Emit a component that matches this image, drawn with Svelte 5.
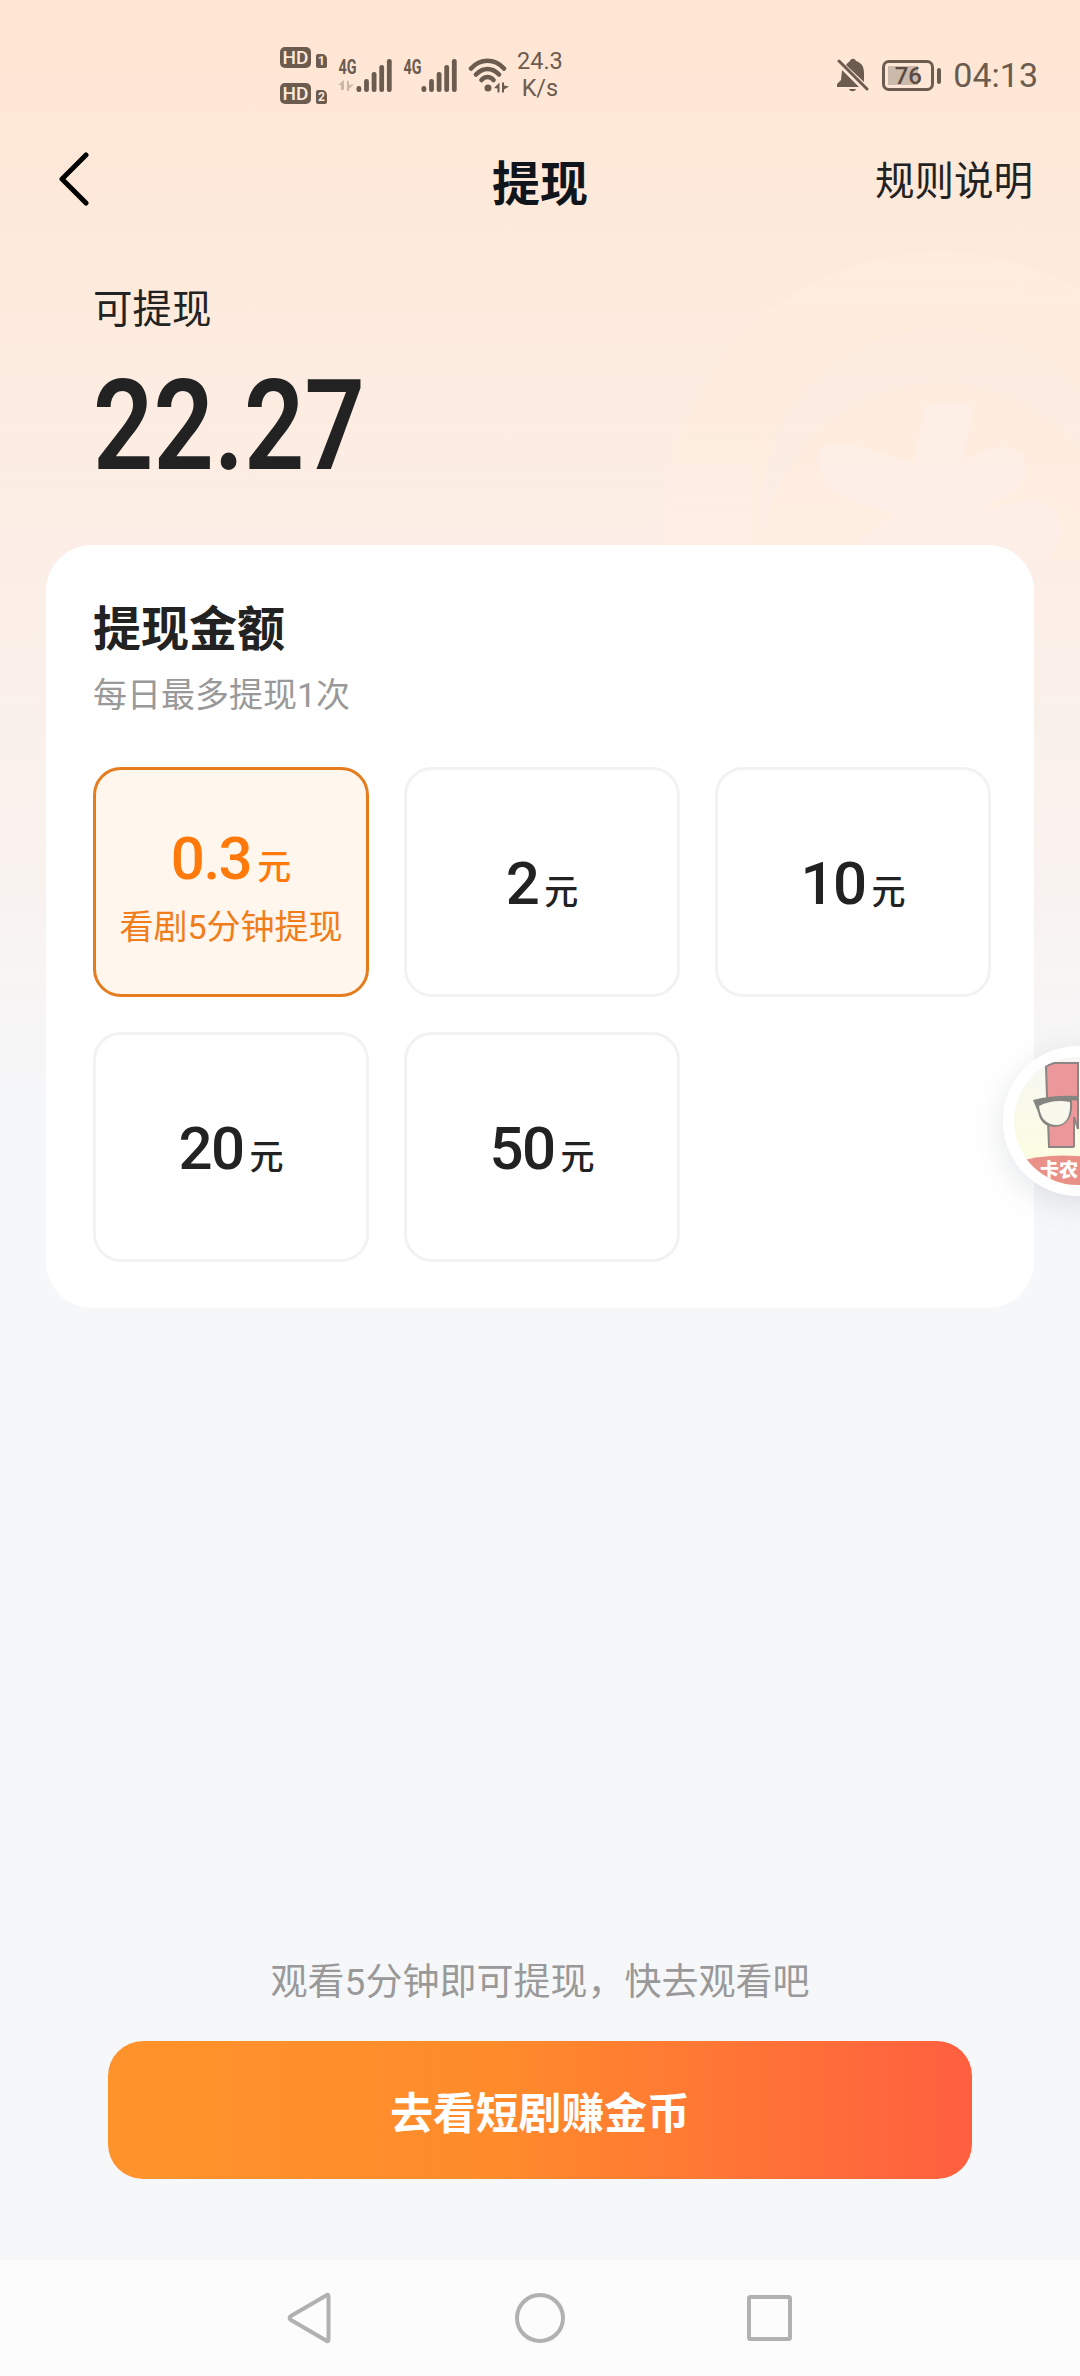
<script>
  let selected = $state(0)

  const options = [
    { amount: '0.3', note: '看剧5分钟提现' },
    { amount: '2' },
    { amount: '10' },
    { amount: '20' },
    { amount: '50' },
  ]
  const bars = [6, 13, 20, 27, 33]
</script>

{#snippet signal(faded)}
  <svg class="signal" width="56" height="36" viewBox="0 0 56 36">
    <text x="0.5" y="16.5" textLength="18" lengthAdjust="spacingAndGlyphs">4G</text>
    {#if faded}
      <path class="faded" d="M6 23v10h-3v-5h-3zM9 34v-10h2v4l5-1-5 5v2z" />
    {/if}
    {#each bars as h, i}
      <rect x={18.5 + i * 7.6} y={35 - h} width="4.8" height={h} rx="2.2" />
    {/each}
  </svg>
{/snippet}

<div class="page">
  <svg class="coin" width="440" height="330" viewBox="0 0 440 330">
    <defs>
      <linearGradient id="ring" x1="0" y1="0" x2="0" y2="1">
        <stop offset="0" stop-color="#ffeddc" stop-opacity=".8" />
        <stop offset="1" stop-color="#ffeede" stop-opacity=".5" />
      </linearGradient>
    </defs>
    <path class="disc" d="M123 330a177 177 0 0 1 354 0z" />
    <path fill="url(#ring)" fill-rule="evenodd" d="M25 330A278 278 0 0 1 300 22A278 278 0 0 1 575 330H475A177 177 0 0 0 300 99A177 177 0 0 0 130 330z" />
    <path class="leaf block" d="M24 234h88v96H24z" />
    <path class="leaf" d="M178 224c2-14 34-12 56-3 12 5 26 8 40 11l10-54c2-8 46-8 50 0l-12 54c14-6 32-20 48-14 22 8 20 32 4 44l-34 18c16-2 40-12 60-8 24 6 30 36 8 58H208c8-20 26-32 46-46-30-10-78-16-76-60z" />
  </svg>

  <div class="status">
    <div class="hd">
      <div><b>HD</b><i>1</i></div>
      <div><b>HD</b><i>2</i></div>
    </div>
    {@render signal(true)}
    {@render signal(false)}
    <svg class="wifi" width="42" height="36" viewBox="0 0 42 36">
      <path d="M3 11.500C12 1 27 1 36 11.500M8 17.500C15 10 24 10 31 17.500M13.500 23C17 19 22 19 25.500 23" />
      <circle cx="20" cy="31" r="3.500" />
      <path class="solid" d="M31.500 25.500v10h-2v-4l-3.500-.5zM34 25.500h2v3l5 1-5 3v3h-2z" />
    </svg>
    <div class="speed">24.3<br />K/s</div>
    <div class="right">
      <svg width="32" height="34" viewBox="0 0 32 34">
        <path class="bell" d="M9 7C10 5 12 4 13 3c1-3 5-3 6 0 6 2 8 6 8 12v9zM5 12l17 17H0v-3l4-4zM12 31h7c-1 3-6 3-7 0z" />
        <path class="slash" d="M2 3l28 28" />
      </svg>
      <div class="battery"><span>76</span></div>
      <span class="clock">04:13</span>
    </div>
  </div>

  <header>
    <svg class="back" width="34" height="54" viewBox="0 0 34 54">
      <path d="M29 3L5 27l24 24" />
    </svg>
    <h1>提现</h1>
    <span class="rules">规则说明</span>
  </header>

  <section class="balance">
    <p>可提现</p>
    <strong>22.27</strong>
  </section>

  <section class="card">
    <h2>提现金额</h2>
    <p class="limit">每日最多提现1次</p>
    <div class="grid">
      {#each options as option, i}
        <button class="tile" class:active={selected === i} onclick={() => (selected = i)}>
          <span class="amount">{option.amount}<small>元</small></span>
          {#if option.note}<span class="note">{option.note}</span>{/if}
        </button>
      {/each}
    </div>
  </section>

  <div class="bottom">
    <p>观看5分钟即可提现，快去观看吧</p>
    <button class="go">去看短剧赚金币</button>
  </div>

  <nav>
    <svg width="50" height="56" viewBox="0 0 50 56"><path d="M42.500 6.500v43q0 3-2.500 1L5 30q-3-2 0-4L40 5.500q2.500-2 2.500 1z" /></svg>
    <svg width="50" height="56" viewBox="0 0 50 56"><circle cx="25" cy="28" r="23" /></svg>
    <svg width="50" height="56" viewBox="0 0 50 56"><rect x="5" y="7" width="41" height="42" rx="1.500" /></svg>
  </nav>

  <div class="floating">
    <svg width="150" height="150" viewBox="0 0 150 150">
      <defs>
        <clipPath id="face"><circle cx="75" cy="75" r="64" /></clipPath>
        <linearGradient id="glow" x1="0" y1="0" x2="0" y2="1">
          <stop offset="0" stop-color="#f6f6f4" />
          <stop offset="1" stop-color="#fdffdc" />
        </linearGradient>
      </defs>
      <circle class="rim" cx="75" cy="75" r="75" />
      <g clip-path="url(#face)">
        <rect width="150" height="150" fill="url(#glow)" />
        <path class="figure" d="M43 20l8-3h24v66l-4-12v29q0 1-2 1H46l-1-26-1-24z" />
        <path class="frame" d="M30 54q20-5 45-4v5l-6-1q2 25-17 27-14 0-17-15z" />
        <path class="lens" d="M36 60q14-7 31-4 1 22-13 23Q38 79 36 60z" />
        <path class="banner" d="M0 121Q40 104 90 112v40H0z" />
        <text x="37" y="131">卡农</text>
      </g>
    </svg>
  </div>
</div>

<style>
  :global(body) { margin: 0; }

  .page {
    position: relative;
    display: flex;
    flex-direction: column;
    width: 1080px;
    height: 2376px;
    overflow: hidden;
    color: #222;
    font-family: Roboto, 'Noto Sans CJK SC', sans-serif;
    background: linear-gradient(#ffe5d3 0, #fde9da 200px, #fceee6 540px, #f9f2ee 850px, #f6f7f9 1100px, #f6f7f9 100%);
  }

  p, h1, h2 { margin: 0; }
  button { font-family: inherit; padding: 0; }

  .coin { position: absolute; left: 640px; top: 230px; }
  .disc { fill: #ffeddc; opacity: .5; }
  .leaf { fill: #fdeee7; opacity: .85; }
  .block { opacity: .5; }

  .status {
    position: relative;
    display: flex;
    align-items: center;
    box-sizing: border-box;
    height: 150px;
    padding: 0 42px 0 280px;
    color: #6c5b4f;
    fill: #6c5b4f;
  }
  .hd { display: flex; flex-direction: column; gap: 15px; margin-right: 11px; }
  .hd div { display: flex; align-items: flex-end; gap: 5px; height: 21px; }
  .hd b, .hd i {
    background: #6c5b4f;
    color: #ffe8d8;
    font-style: normal;
    text-align: center;
  }
  .hd b { width: 31px; height: 21px; border-radius: 5px; font-size: 19px; line-height: 22px; font-weight: 500; }
  .hd i { width: 11px; height: 14px; border-radius: 2px 5px 2px 2px; font-size: 12px; line-height: 15px; font-weight: 700; }
  .signal { margin-right: 9px; overflow: visible; }
  .signal text { font-size: 20px; font-weight: 700; }
  .faded { opacity: .35; }
  .wifi path { fill: none; stroke: #6c5b4f; stroke-width: 4.500; stroke-linecap: round; }
  .wifi .solid { fill: #6c5b4f; stroke: none; }
  .speed { margin-left: 7px; text-align: center; font-size: 23.500px; line-height: 27px; }
  .right { display: flex; align-items: center; margin-left: auto; }
  .slash { stroke: #6c5b4f; stroke-width: 3; stroke-linecap: round; }
  .battery {
    position: relative;
    box-sizing: border-box;
    width: 52px;
    height: 31px;
    margin: 0 19px 0 13px;
    padding: 3px;
    border: 3px solid #6c5b4f;
    border-radius: 7px;
  }
  .battery span {
    display: block;
    height: 19px;
    background: linear-gradient(90deg, #cbb9ab 76%, transparent 76%);
    text-align: center;
    font-size: 24px;
    line-height: 20px;
    font-weight: 500;
    color: #5c4a3f;
  }
  .battery::after {
    content: '';
    position: absolute;
    right: -10px;
    top: 5px;
    width: 4px;
    height: 16px;
    border-radius: 2px;
    background: #6c5b4f;
  }
  .clock { font-size: 34px; }

  header {
    position: relative;
    display: grid;
    grid-template-columns: 1fr auto 1fr;
    align-items: center;
    height: 66px;
    padding: 0 47px;
  }
  .back { margin: -9px 0 0 10px; }
  .back path { fill: none; stroke: #000; stroke-width: 5; stroke-linecap: round; stroke-linejoin: round; }
  h1 { padding-top: 4px; font-size: 48px; line-height: 62px; font-weight: 700; color: #10151c; }
  .rules { justify-self: end; font-size: 39.500px; line-height: 60px; margin-top: -2px; }

  .balance { position: relative; height: 329px; padding-left: 93px; }
  .balance p { padding-top: 64px; font-size: 39.500px; line-height: 60px; }
  .balance strong {
    display: block;
    width: max-content;
    margin-top: 11px;
    font-size: 126px;
    line-height: 150px;
    font-weight: 600;
    transform: scaleX(.84);
    transform-origin: left;
  }

  .card {
    position: relative;
    box-sizing: border-box;
    height: 763px;
    margin: 0 46px;
    padding: 50px 43px 0 47px;
    border-radius: 46px;
    background: #fff;
  }
  h2 { font-size: 48px; line-height: 70px; font-weight: 700; }
  .limit { margin-top: 5px; font-size: 34px; line-height: 50px; color: #999; }
  .grid { display: grid; grid-template-columns: repeat(3, 276px); gap: 35px; margin-top: 47px; }
  .tile {
    display: flex;
    flex-direction: column;
    align-items: center;
    justify-content: center;
    box-sizing: border-box;
    height: 230px;
    padding-top: 11px;
    border: 3px solid #f2f2f2;
    border-radius: 28px;
    background: #fff;
    color: #222;
  }
  .active { border-color: #e57c1e; background: #fff6ed; color: #ff7a0a; }
  .amount { font-size: 60px; line-height: 70px; font-weight: 500; letter-spacing: -1.500px; }
  .amount small { margin-left: 6px; font-size: 34px; letter-spacing: 0; }
  .note { font-size: 34px; line-height: 50px; margin-top: 0; color: #f07d1a; }

  .bottom { display: flex; flex-direction: column; align-items: center; margin-top: auto; padding-bottom: 81px; }
  .bottom p { font-size: 37px; line-height: 56px; color: #999; }
  .go {
    width: 864px;
    height: 138px;
    margin-top: 30px;
    border: 0;
    border-radius: 35px;
    background: linear-gradient(90deg, #ff932b 0, #ff8b2b 45%, #ff5f40 100%);
    color: #fff;
    font-size: 42.800px;
    font-weight: 700;
  }

  nav { display: flex; align-items: center; justify-content: center; gap: 179px; height: 116px; background: #fcfcfc; }
  nav svg { fill: none; stroke: #b1b1b1; stroke-width: 4; }

  .floating {
    position: absolute;
    left: 1003px;
    top: 1046px;
    width: 150px;
    height: 150px;
    border-radius: 50%;
    box-shadow: 0 8px 32px rgba(90, 100, 110, .16);
  }
  .rim { fill: #fff; opacity: .85; }
  .figure { fill: #ec9799; stroke: #8b8584; stroke-width: 2; }
  .frame { fill: #858581; }
  .lens { fill: #f8f8ec; }
  .banner { fill: #e99189; }
  .floating text { fill: #fff; font-size: 19px; font-weight: 900; }
</style>
